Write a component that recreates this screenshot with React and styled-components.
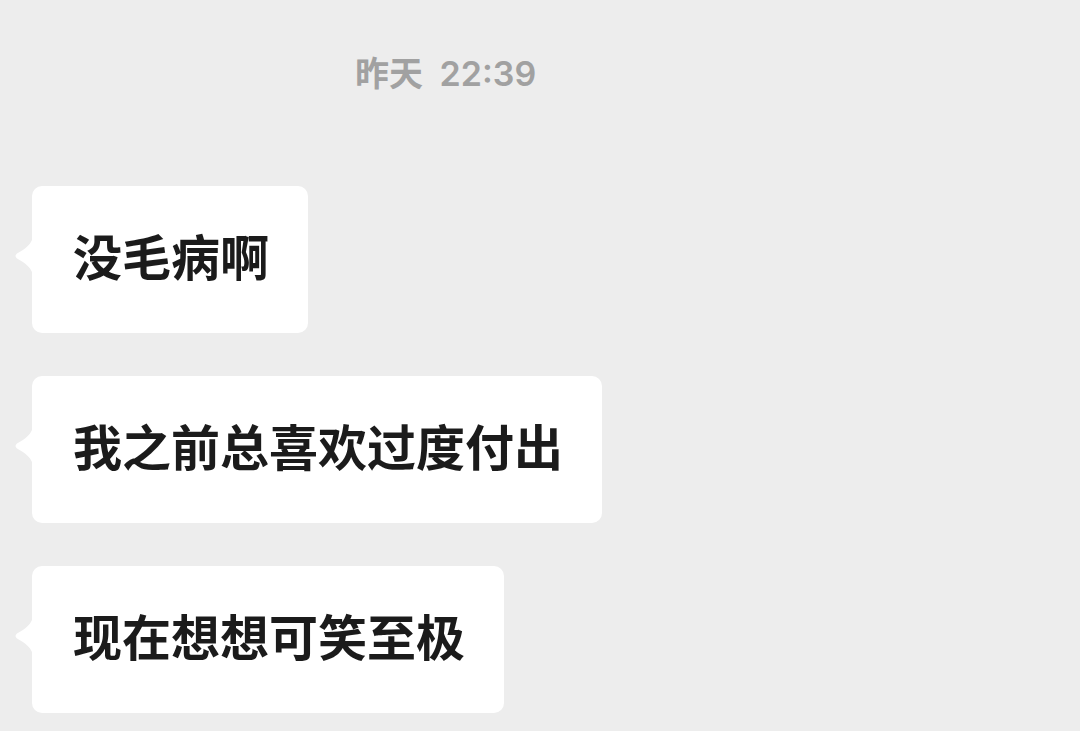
import React from "react";
import styled, { createGlobalStyle } from "styled-components";

const GlobalStyle = createGlobalStyle`
  html, body {
    margin: 0;
    padding: 0;
    background: #ededed;
  }
  body {
    font-family: "Noto Sans CJK SC", "Noto Sans", sans-serif;
  }
`;

const Page = styled.div`
  width: 1080px;
  height: 731px;
  overflow: hidden;
  background: #ededed;
  padding-top: 54px;
  box-sizing: border-box;
`;

const TimeRow = styled.div`
  display: flex;
  justify-content: flex-start;
  padding-left: 355px;
  height: 40px;
  line-height: 40px;
  font-family: Inter, "Noto Sans CJK SC", sans-serif;
  font-size: 34px;
  font-weight: 600;
  color: #a1a1a1;
  word-spacing: 8px;
`;

const Thread = styled.div`
  display: flex;
  flex-direction: column;
  align-items: flex-start;
  gap: 43px;
  margin-top: 92px;
  padding-left: 32px;
`;

const Bubble = styled.div`
  position: relative;
  background: #ffffff;
  border-radius: 10px;
  padding: 35px 39px 45px 41px;
  font-size: 49px;
  line-height: 67px;
  font-weight: 700;
  color: #1b1b1b;
  white-space: nowrap;
`;

const Tail = styled.svg`
  position: absolute;
  left: -19px;
  top: 48px;
  width: 20px;
  height: 44px;
  display: block;
`;

function Message({ text }) {
  return (
    <Bubble>
      <Tail viewBox="0 0 20 44" aria-hidden="true">
        <path
          d="M20 0 C20 10 12 15 4 19.5 Q1 22 4 24.5 C12 29 20 34 20 44 Z"
          fill="#ffffff"
        />
      </Tail>
      {text}
    </Bubble>
  );
}

const messages = ["没毛病啊", "我之前总喜欢过度付出", "现在想想可笑至极"];

export default function App() {
  return (
    <>
      <GlobalStyle />
      <Page>
        <TimeRow>昨天 22:39</TimeRow>
        <Thread>
          {messages.map((m) => (
            <Message key={m} text={m} />
          ))}
        </Thread>
      </Page>
    </>
  );
}
